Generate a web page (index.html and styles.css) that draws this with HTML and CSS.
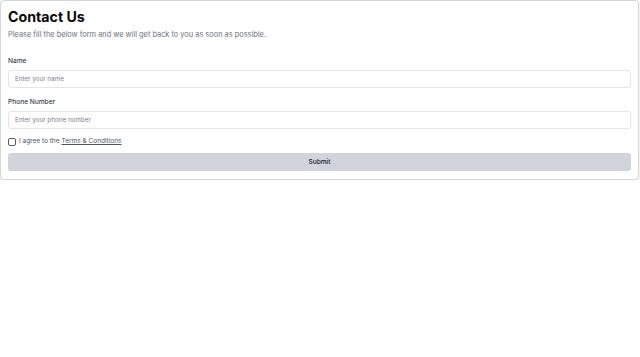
FILE: index.html
```html
<!DOCTYPE html>
<html>
<head>
<meta charset="utf-8">
<link rel="stylesheet" href="styles.css">
</head>
<body>
<div class="card">
  <h1 class="title">Contact Us</h1>
  <p class="subtitle">Please fill the below form and we will get back to you as soon as possible.</p>
  <form class="form">
    <div class="field">
      <label class="label">Name</label>
      <input class="input" type="text" placeholder="Enter your name">
    </div>
    <div class="field">
      <label class="label">Phone Number</label>
      <input class="input" type="text" placeholder="Enter your phone number">
    </div>
    <label class="agree"><span class="box"></span>I agree to the <a class="link">Terms &amp; Conditions</a></label>
    <button class="submit" type="button">Submit</button>
  </form>
</div>
</body>
</html>
```
FILE: styles.css
```css
* { box-sizing: border-box; }
body {
  margin: 0;
  font-family: Inter, "Noto Sans", sans-serif;
  background: #fff;
  color: #111827;
}
.card {
  width: 639px;
  border: 1px solid #d4d6da;
  border-radius: 4px;
  box-shadow: 0 1px 3px rgba(0,0,0,0.12);
  padding: 7px 7px 8px 7px;
  background: #fff;
}
.title {
  margin: 0;
  font-size: 14.2px;
  font-weight: 700;
  line-height: 17px;
  color: #0a0a0a;
}
.subtitle {
  margin: 5px 0 0;
  font-size: 7.4px;
  line-height: 10px;
  color: #6b7280;
}
.form {
  margin-top: 17px;
  display: flex;
  flex-direction: column;
}
.field {
  display: flex;
  flex-direction: column;
}
.field + .field { margin-top: 10px; }
.label {
  font-size: 6.6px;
  font-weight: 500;
  color: #374151;
  line-height: 9px;
  margin-bottom: 4px;
}
.input {
  height: 18px;
  border: 1px solid #e3e5e8;
  border-radius: 3px;
  padding: 0 6px;
  font-family: inherit;
  font-size: 6.3px;
  color: #111827;
  outline: none;
}
.input::placeholder { color: #7c808a; }
.agree {
  display: flex;
  align-items: center;
  font-size: 6.5px;
  color: #4b5563;
  line-height: 9px;
  margin-top: 8px;
}
.box {
  width: 8px;
  height: 8px;
  border: 1px solid #565a62;
  border-radius: 2px;
  margin-right: 3px;
  background: #fff;
}
.link {
  margin-left: 2px;
  color: #4b5563;
  text-decoration: underline;
}
.submit {
  margin-top: 7px;
  height: 18px;
  border: none;
  border-radius: 3px;
  background: #d1d5db;
  font-family: inherit;
  font-size: 6.6px;
  font-weight: 500;
  color: #111827;
}
```
